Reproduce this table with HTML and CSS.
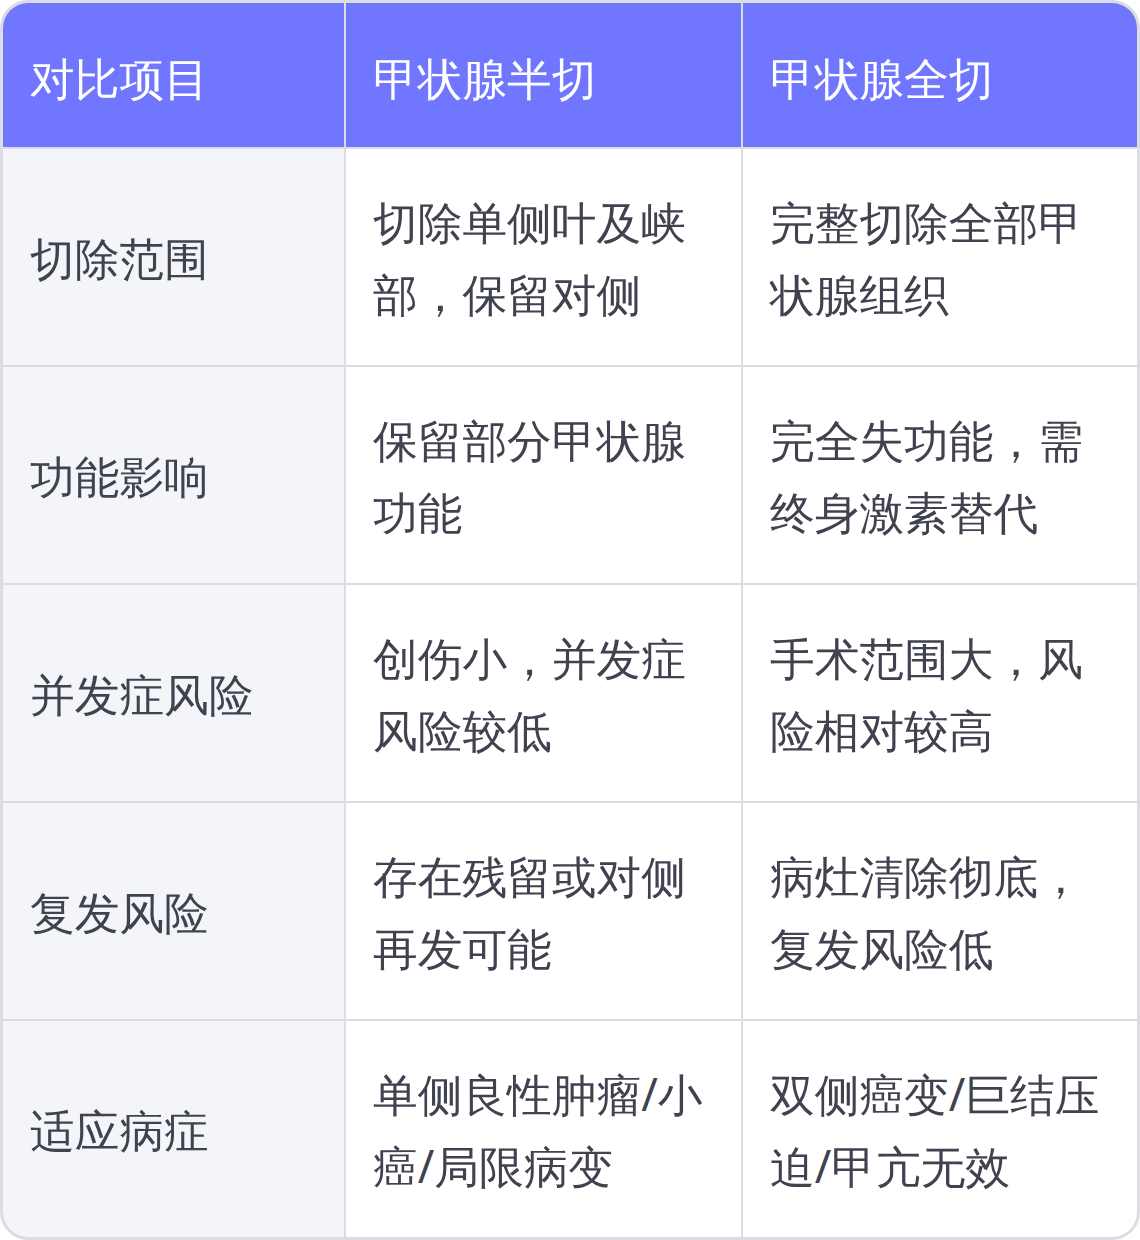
FILE: index.html
```html
<!DOCTYPE html>
<html lang="zh-CN">
<head>
<meta charset="utf-8">
<link rel="stylesheet" href="styles.css">
</head>
<body>
<div class="table">
  <div class="cell head">对比项目</div>
  <div class="cell head">甲状腺半切</div>
  <div class="cell head">甲状腺全切</div>

  <div class="cell label">切除范围</div>
  <div class="cell">切除单侧叶及峡部，保留对侧</div>
  <div class="cell">完整切除全部甲状腺组织</div>

  <div class="cell label">功能影响</div>
  <div class="cell">保留部分甲状腺功能</div>
  <div class="cell">完全失功能，需终身激素替代</div>

  <div class="cell label">并发症风险</div>
  <div class="cell">创伤小，并发症风险较低</div>
  <div class="cell">手术范围大，风险相对较高</div>

  <div class="cell label">复发风险</div>
  <div class="cell">存在残留或对侧再发可能</div>
  <div class="cell">病灶清除彻底，复发风险低</div>

  <div class="cell label">适应病症</div>
  <div class="cell">单侧良性肿瘤/小癌/局限病变</div>
  <div class="cell">双侧癌变/巨结压迫/甲亢无效</div>
</div>
</body>
</html>
```
FILE: styles.css
```css
html, body {
  margin: 0;
  padding: 0;
  background: #ffffff;
}
body {
  font-family: "Noto Sans", "WenQuanYi Zen Hei", "Noto Sans CJK SC", sans-serif;
}
.table {
  width: 1140px;
  height: 1240px;
  box-sizing: border-box;
  border: 3px solid #dcdde2;
  border-radius: 28px;
  overflow: hidden;
  display: grid;
  grid-template-columns: 341px 395px 394px;
  grid-template-rows: 144px repeat(5, 216px);
  gap: 2px;
  background: #dcdde2;
}
.cell {
  background: #ffffff;
  color: #40434f;
  font-size: 44.7px;
  line-height: 72px;
  padding: 2px 26px 0 27px;
  display: flex;
  align-items: center;
  box-sizing: border-box;
}
.cell.head {
  background: #7176ff;
  color: #ffffff;
  padding-top: 6px;
}
.cell.label {
  background: #f4f5f9;
}
```
